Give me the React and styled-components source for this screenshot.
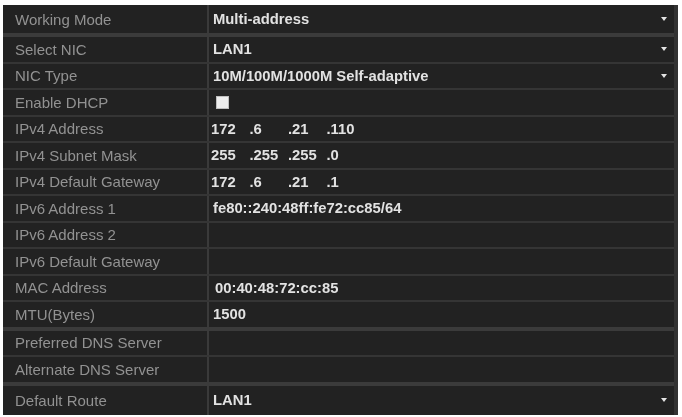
import React from 'react';
import styled, { createGlobalStyle } from 'styled-components';

const GlobalStyle = createGlobalStyle`
  html, body {
    margin: 0;
    padding: 0;
    background: #ffffff;
  }
  body {
    font-family: "Liberation Sans", Arial, sans-serif;
  }
`;

const groups = [
  [{ label: 'Working Mode', value: 'Multi-address', select: true, tall: 28 }],
  [
    { label: 'Select NIC', value: 'LAN1', select: true },
    { label: 'NIC Type', value: '10M/100M/1000M Self-adaptive', select: true },
    { label: 'Enable DHCP', check: true },
    { label: 'IPv4 Address', ip: ['172', '6', '21', '110'] },
    { label: 'IPv4 Subnet Mask', ip: ['255', '255', '255', '0'] },
    { label: 'IPv4 Default Gateway', ip: ['172', '6', '21', '1'] },
    { label: 'IPv6 Address 1', value: 'fe80::240:48ff:fe72:cc85/64' },
    { label: 'IPv6 Address 2' },
    { label: 'IPv6 Default Gateway' },
    { label: 'MAC Address', value: '00:40:48:72:cc:85', indent: true },
    { label: 'MTU(Bytes)', value: '1500' },
  ],
  [
    { label: 'Preferred DNS Server' },
    { label: 'Alternate DNS Server' },
  ],
  [{ label: 'Default Route', value: 'LAN1', select: true, tall: 29 }],
];

export default function App() {
  return (
    <>
      <GlobalStyle />
      <Panel>
        {groups.map((rows, gi) => (
          <Group key={gi}>
            {rows.map((row, ri) => (
              <Row key={ri} $h={row.tall}>
                <Label>{row.label}</Label>
                <Value $indent={row.indent}>
                  {row.value && <span>{row.value}</span>}
                  {row.check && <Check />}
                  {row.ip && (
                    <IpField>
                      {row.ip.map((o, i) => (
                        <Octet key={i}>{i === 0 ? o : '.' + o}</Octet>
                      ))}
                    </IpField>
                  )}
                  {row.select && (
                    <Arrow width="6" height="4" viewBox="0 0 6 4">
                      <path d="M0 0 L6 0 L3 4 Z" fill="#e4e4e4" />
                    </Arrow>
                  )}
                </Value>
              </Row>
            ))}
          </Group>
        ))}
      </Panel>
    </>
  );
}

// ------------------------------------------------------------------------------------

const Panel = styled.div`
  margin: 5px 0 0 3px;
  width: 671px;
  height: 410px;
  background: #3b3b3b;
  border-right: 4px solid #323232;
  display: flex;
  flex-direction: column;
  gap: 4px;
  filter: blur(0.35px);
`

const Group = styled.div`
  display: flex;
  flex-direction: column;
  gap: 2px;
  background: #353535;
`

const Row = styled.div`
  display: flex;
  height: ${p => (p.$h ? p.$h : 24.5)}px;
  background: #222222;
`

const Label = styled.div`
  width: 192px;
  padding-left: 12px;
  display: flex;
  align-items: center;
  font-size: 15px;
  color: #929292;
  white-space: nowrap;
`

const Value = styled.div`
  flex: 1;
  display: flex;
  align-items: center;
  border-left: 2px solid #3a3a3a;
  padding-left: ${p => (p.$indent ? 6 : 4)}px;
  font-size: 14.8px;
  font-weight: bold;
  color: #e2e2e2;
  white-space: nowrap;
`

const IpField = styled.div`
  display: flex;
  margin-left: -2px;
`

const Octet = styled.span`
  width: 38.5px;
`

const Check = styled.div`
  width: 11px;
  height: 11px;
  margin-left: 3px;
  background: #ececec;
  border: 1px solid #bdbdbd;
`

const Arrow = styled.svg`
  margin-left: auto;
  margin-right: 7px;
`
